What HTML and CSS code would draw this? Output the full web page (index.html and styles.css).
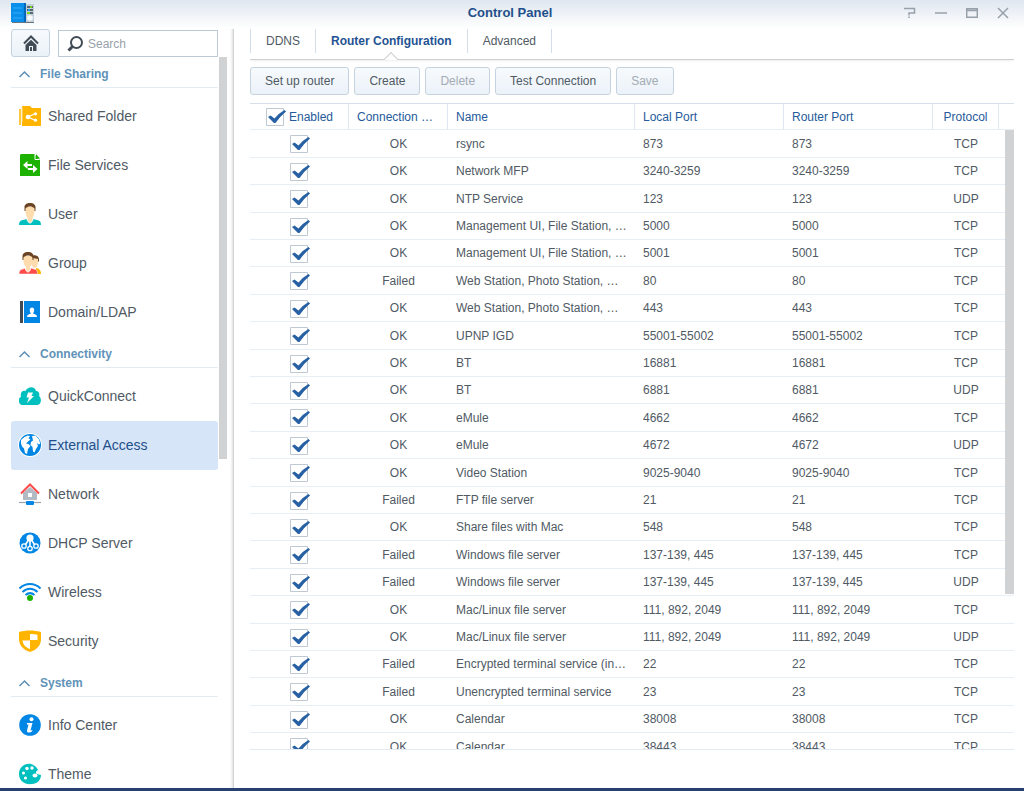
FILE: index.html
```html
<!DOCTYPE html>
<html lang="en">
<head>
    <meta charset="utf-8">
    <title>Control Panel</title>
    <link rel="stylesheet" href="styles.css">
</head>
<body>
    <!-- Title bar -->
    <header class="titlebar">
        <svg class="app-icon" viewBox="0 0 24 20">
            <rect x="12" y="1" width="11" height="18" fill="#c3d0da"/>
            <path d="M1 19h22v1H1z" fill="#68747f"/>
            <rect width="14" height="19" fill="#0a8fea"/>
            <rect x="13" width="2" height="19" fill="#0568b8"/>
            <path d="M2 5h9M2 10h9M2 15h9" stroke="#35aef8"/>
            <path d="M16 4h6M16 7h6M16 10h6" stroke="#39464f" stroke-width="1.5"/>
            <path d="M19 4h2M16 10h3" stroke="#7ed321" stroke-width="2"/>
            <path d="M17 7h2" stroke="#1b9df0" stroke-width="2"/>
            <circle cx="19" cy="15" r="2.8" fill="#f7fafb"/>
        </svg>
        <h1>Control Panel</h1>
        <div class="window-controls">
            <button aria-label="Help"><svg viewBox="0 0 12 12"><path d="M0 1.500h10.500v4.500H5v2.500M5 9.500v1.500"/></svg></button>
            <button aria-label="Minimize"><svg viewBox="0 0 12 12"><path d="M0 6h12"/></svg></button>
            <button aria-label="Maximize"><svg viewBox="0 0 12 12"><path d="M.7 1.700h10.600v8.600H.7zM1 3.500h10"/></svg></button>
            <button aria-label="Close"><svg viewBox="0 0 12 12"><path d="M1 1l10 10M11 1L1 11"/></svg></button>
        </div>
    </header>

    <div class="content">
        <!-- Sidebar -->
        <aside class="sidebar">
            <div class="toolbar">
                <button class="home" aria-label="Home">
                    <svg viewBox="0 0 16 16"><path d="M1 8.500L8 1.500l7 7" fill="none" stroke="#414b55" stroke-width="2"/><path d="M2.500 10L8 4.700l5.500 5.300v6H10v-5H6v5H2.500z" fill="#414b55"/><path d="M7 12h2v4H7z" fill="#414b55"/></svg>
                </button>
                <div class="search">
                    <svg viewBox="0 0 16 16"><circle cx="9.500" cy="6.500" r="5.500" fill="none" stroke="#414b55" stroke-width="2"/><path d="M5.500 10.500l-4 4" stroke="#414b55" stroke-width="3"/></svg>
                    <input type="text" placeholder="Search" aria-label="Search">
                </div>
            </div>
            <nav class="menu">
                <button class="section"><svg viewBox="0 0 12 8"><path d="M1 7l5-5 5 5"/></svg>File Sharing</button>
                <a href="#shared-folder">
                    <svg viewBox="0 0 22 22"><path d="M1 4v16" stroke="#ffb400" stroke-width="1.500"/><path d="M3 1h8l2 2h9v18H3z" fill="#ffb400"/><path d="M3 2v15" stroke="#ffe0a0"/><path d="M16.500 8.500L9 12l7.500 3.500" fill="none" stroke="#fff" stroke-width="1.200"/><circle cx="9" cy="12" r="2.300" fill="#fff"/><circle cx="16.500" cy="8.800" r="1.600" fill="#fff"/><circle cx="16.500" cy="15.200" r="1.600" fill="#fff"/></svg>
                    Shared Folder
                </a>
                <a href="#file-services">
                    <svg viewBox="0 0 22 22"><path d="M2 0h13l6 6v16H1V1z" fill="#1db100"/><path d="M17 0v4.500h4z" fill="#1db100"/><path d="M16 1v4.500h4.500" fill="none" stroke="#fff"/><path d="M4 11l4.500-4v3h4.500v2H8.500v3zM18.500 15L14 11v3H9v2h5v3z" fill="#fff"/></svg>
                    File Services
                </a>
                <a href="#user">
                    <svg viewBox="0 0 22 22"><path d="M0 22c0-3 1-4.500 4-5l4-1h6l4 1c3 .5 4 2 4 5z" fill="#00bfbf"/><path d="M8 13v3c0 2 2 4 3 4s3-2 3-4v-3z" fill="#ffdcae" stroke="#fff"/><path d="M6.500 4h9v5c0 3-2 7-4.500 7s-4.500-4-4.500-7z" fill="#ffdcae"/><path d="M5.500 8V4C5.500 1.500 8 0 11 0s5.500 1.500 5.500 4v4h-1V5.500C14 4 12.500 3.500 11 3.500S8 4 6.500 5.500V8z" fill="#6b4423"/></svg>
                    User
                </a>
                <a href="#group">
                    <svg viewBox="0 0 22 22"><path d="M17 16c3 .5 5 2 5 6h-5z" fill="#ffb400"/><path d="M13 6h6v4c0 3-1.500 6-3.500 6S12 13 13 6z" fill="#ffdcae"/><path d="M12 5c2-3 8-2 8 2v2l-1 1V7l-5-1z" fill="#6b4423"/><path d="M0 22c0-3 1-4.500 4-5l3-1h5l3 1c3 .5 3.500 2 3.500 5z" fill="#ff4a4a" stroke="#fff" stroke-width=".5"/><path d="M6.500 14v2.500c0 2 1.500 3.500 2.500 3.500s2.500-1.500 2.500-3.500V14z" fill="#ffdcae" stroke="#fff"/><path d="M4.500 4h9v5c0 3-2 7-4.500 7s-4.500-4-4.500-7z" fill="#ffdcae"/><path d="M3.500 8V4C3.500 1.500 6 0 9 0s5.500 1.500 5.500 4v4h-1V5.500C12 4 10.500 3.500 9 3.500S6 4 4.500 5.500V8z" fill="#6b4423"/></svg>
                    Group
                </a>
                <a href="#domain">
                    <svg viewBox="0 0 22 22"><path d="M1 0h3v22H1z" fill="#414b55"/><path d="M5 0h16v22H5z" fill="#0086e5"/><path d="M8 16c0-2 1-2.500 4-3.500-1.500-2-2-6 1-6s2.500 4 1 6c3 1 4 1.500 4 3.500z" fill="#fff"/></svg>
                    Domain/LDAP
                </a>
                <button class="section"><svg viewBox="0 0 12 8"><path d="M1 7l5-5 5 5"/></svg>Connectivity</button>
                <a href="#quickconnect">
                    <svg viewBox="0 0 22 22"><path d="M4 20c-5 0-5.500-7-2-8-1-4 1-7 4.500-6C9 1 16 1 17 6c3 0 4 3 3 5 3 2 2.500 9-2 9z" fill="#00bfbf"/><path d="M9 7.500h5l-1.500 3.500H15l-7 7 2-5.500H7.500z" fill="#fff"/></svg>
                    QuickConnect
                </a>
                <a href="#external-access" class="active">
                    <svg viewBox="0 0 22 22" overflow="visible"><circle cx="11" cy="11" r="12" fill="#fff"/><circle cx="11" cy="11" r="11" fill="#0086e5"/><path d="M2 6l3.500-3L9 1.500l2 .8-1.500 2 2 1.200L9 7.500l-2 2 2.500.5 2 2L9 15l-1 5-2-1-1-4.500-2-2-1-3zM13 2l3.500-.5L20 5.500l1.200 4-1.200 1-2-1.500 1 3-2 3-1.500 3.500-1.500-1-.5-4.500-2-2 .5-3 2-1.500z" fill="#fff"/></svg>
                    External Access
                </a>
                <a href="#network">
                    <svg viewBox="0 0 22 22"><path d="M4 10l7-6 7 6v7H4z" fill="#b2bbc4"/><path d="M9 10h4v4H9z" fill="#fff"/><path d="M2 10.500L11 1.500l9 9" fill="none" stroke="#ff4a4a" stroke-width="2"/><path d="M0 19.500h22" stroke="#9aa5af" stroke-width="1.200"/><rect x="7" y="18" width="8" height="4" rx="1" fill="#0086e5"/></svg>
                    Network
                </a>
                <a href="#dhcp">
                    <svg viewBox="0 0 22 22"><circle cx="11" cy="11" r="10.500" fill="#0086e5"/><circle cx="11" cy="6" r="3.600" fill="#fff"/><path d="M11 6v9M9.500 8L5.500 14M12.500 8l4 6" stroke="#fff" stroke-width="1.600"/><g fill="#0086e5" stroke="#fff" stroke-width="1.300"><circle cx="5" cy="14" r="2.200"/><circle cx="11" cy="16.500" r="2.200"/><circle cx="17" cy="14" r="2.200"/></g></svg>
                    DHCP Server
                </a>
                <a href="#wireless">
                    <svg viewBox="0 0 22 22"><g fill="none" stroke="#0086e5" stroke-width="2"><path d="M.5 7.500c6-6 15-6 21 0M3.500 11c4.500-4.500 10.500-4.500 15 0M6.500 14c3-2.500 6-2.500 9 0"/></g><circle cx="11" cy="17" r="3" fill="#1db100"/></svg>
                    Wireless
                </a>
                <a href="#security">
                    <svg viewBox="0 0 22 22"><path d="M0 2c7-2 15-2 22 0v7c0 6-4 11-11 13C4 20 0 15 0 9z" fill="#ffb400"/><path d="M11 4c3 0 5 .2 7.500.8V10H11zM3.500 10.500H11V19c-4-1.500-7-4-7.500-8.500z" fill="#fff"/></svg>
                    Security
                </a>
                <button class="section"><svg viewBox="0 0 12 8"><path d="M1 7l5-5 5 5"/></svg>System</button>
                <a href="#info-center">
                    <svg viewBox="0 0 22 22"><circle cx="11" cy="11" r="10.800" fill="#0086e5"/><circle cx="12.500" cy="5.300" r="2" fill="#fff"/><path d="M8 9h5.500l-2 7.500 2-.5-.5 1.500c-2 1.500-5.500 1.500-5-1l1.500-6H8z" fill="#fff"/></svg>
                    Info Center
                </a>
                <a href="#theme">
                    <svg viewBox="0 0 22 22"><path d="M12 1C5 0 0 5 0 11c0 7 6 11 13 10 5 0 9-4 9-9l-4-1c-2-1-1-3 1-4-1-3-4-5-7-6z" fill="#00bfbf"/><g fill="#fff"><circle cx="8" cy="5.500" r="1.700"/><circle cx="13" cy="5" r="1.700"/><circle cx="4.500" cy="10" r="1.500"/><circle cx="6.500" cy="15" r="1.600"/><ellipse cx="16" cy="12.500" rx="2.500" ry="2"/></g></svg>
                    Theme
                </a>
            </nav>
            <div class="scrollbar menu-scrollbar"></div>
        </aside>

        <!-- Router configuration -->
        <main>
            <div class="tabs" role="tablist">
                <button role="tab">DDNS</button>
                <button role="tab" class="active" aria-selected="true">Router Configuration</button>
                <button role="tab">Advanced</button>
            </div>
            <div class="actions">
                <button>Set up router</button>
                <button>Create</button>
                <button disabled>Delete</button>
                <button>Test Connection</button>
                <button disabled>Save</button>
            </div>
            <div class="rules">
                <table>
                    <colgroup>
                        <col class="col-status"><col class="col-status"><col>
                        <col class="col-port"><col class="col-port"><col class="col-protocol"><col class="col-end">
                    </colgroup>
                    <thead>
                        <tr>
                            <th class="check-all"><label><input type="checkbox" checked> Enabled</label></th>
                            <th>Connection …</th>
                            <th>Name</th>
                            <th>Local Port</th>
                            <th>Router Port</th>
                            <th class="center">Protocol</th>
                            <td></td>
                        </tr>
                    </thead>
                    <tbody id="rules"></tbody>
                </table>
                <div class="scrollbar table-scrollbar"></div>
            </div>
        </main>
    </div>

    <script src="script.js"></script>
</body>
</html>
```
FILE: styles.css
```css
* {
    box-sizing: border-box;
}
body {
    display: flex;
    flex-direction: column;
    height: 100vh;
    margin: 0;
    border-bottom: 3px solid #27406f;
    background: linear-gradient(#e0e7f0, #fff 29px);
    color: #505a64;
    font-family: "Liberation Sans", Arial, sans-serif;
    font-size: 12px;
    overflow: hidden;
}
button, input {
    margin: 0;
    padding: 0;
    border: none;
    background: none;
    color: inherit;
    font: inherit;
}
button {
    cursor: pointer;
}
svg {
    display: block;
    flex: none;
}

/* Title bar */
.titlebar {
    display: grid;
    grid-template-columns: 1fr auto 1fr;
    align-items: center;
    height: 29px;
    padding: 0 15px 4px 11px;
    flex: none;
}
.titlebar h1 {
    margin: 0;
    color: #1f4f8b;
    font-size: 13px;
}
.app-icon {
    width: 24px;
    height: 20px;
}
.window-controls {
    display: flex;
    justify-content: flex-end;
    gap: 19px;
}
.window-controls svg {
    width: 12px;
    height: 12px;
    fill: none;
    stroke: #98a0aa;
    stroke-width: 1.5;
}

.content {
    display: flex;
    flex: 1;
    min-height: 0;
}

/* Sidebar */
.sidebar {
    position: relative;
    display: flex;
    flex-direction: column;
    width: 234px;
    flex: none;
    padding: 0 15px 0 11px;
    border-right: 1px solid #d0d3d6;
    box-shadow: inset -3px 0 3px -2px #ddd;
}
.toolbar {
    display: flex;
    gap: 8px;
    height: 28px;
    flex: none;
}
.home, .actions button {
    border: 1px solid #c5d2df;
    border-radius: 3px;
    background: linear-gradient(#f7fafd, #ebf2f8);
}
.home {
    display: flex;
    align-items: center;
    justify-content: center;
    width: 39px;
}
.home svg, .search svg {
    width: 16px;
    height: 16px;
}
.search {
    display: flex;
    flex: 1;
    align-items: center;
    gap: 5px;
    margin-top: 1px;
    padding: 0 8px;
    border: 1px solid #bccad8;
    background: #fff;
}
.search input {
    width: 100%;
    outline: none;
}
.search input::placeholder {
    color: #98a1aa;
}
.menu {
    flex: 1;
    min-height: 0;
    overflow: hidden;
}
.menu .section {
    display: flex;
    align-items: center;
    gap: 9px;
    width: 100%;
    height: 27px;
    margin: 4px 0;
    padding-left: 7px;
    border-bottom: 1px solid #e3ebf2;
    color: #5f93b9;
    font-weight: bold;
}
.section svg {
    width: 13px;
    height: 8px;
    fill: none;
    stroke: #5f8fb4;
    stroke-width: 1.5;
}
.menu a {
    display: flex;
    align-items: center;
    gap: 7px;
    height: 49px;
    padding: 0 8px 1px;
    border-radius: 3px;
    color: #505a64;
    font-size: 14px;
    text-decoration: none;
}
.menu a svg {
    width: 22px;
    height: 22px;
}
.menu a.active {
    background: #d6e6f8;
    color: #1f4f8b;
}
.scrollbar {
    position: absolute;
    right: 0;
    width: 9px;
    background: #d0d2d4;
}
.menu-scrollbar {
    top: 28px;
    right: 6px;
    width: 8px;
    height: 53%;
}

/* Main panel */
main {
    display: flex;
    flex: 1;
    flex-direction: column;
    min-width: 0;
    padding: 0 10px 38px 16px;
}
.tabs {
    display: flex;
    height: 31px;
    flex: none;
    padding-bottom: 6px;
    border-bottom: 1px solid #cdd0d2;
    box-shadow: 0 2px 2px -1px #eee;
}
.tabs button {
    position: relative;
    padding: 0 15px;
    border-right: 1px solid #d3deea;
}
.tabs button:first-child {
    border-left: 1px solid #d3deea;
}
.tabs .active {
    color: #1f5393;
    font-weight: bold;
}
.tabs .active::after {
    content: "";
    position: absolute;
    bottom: -11px;
    left: 50%;
    width: 9px;
    height: 9px;
    margin-left: -5px;
    border: 1px solid #cdd0d2;
    border-width: 1px 0 0 1px;
    background: linear-gradient(135deg, #fff 50%, transparent 50%);
    transform: rotate(45deg);
}
.actions {
    display: flex;
    gap: 5px;
    margin: 7px 0 8px;
}
.actions button {
    height: 28px;
    padding: 0 14px;
}
.actions button:disabled {
    color: #a3abb4;
    cursor: default;
}

/* Port forwarding rules */
.rules {
    position: relative;
    flex: 1;
    min-height: 0;
    border-top: 1px solid #d5e0eb;
    border-bottom: 1px solid #e3ebf2;
    overflow: hidden;
}
table {
    width: 100%;
    border-spacing: 0;
    table-layout: fixed;
}
.col-status {
    width: 99px;
}
.col-port {
    width: 149px;
}
.col-protocol {
    width: 66px;
}
.col-end {
    width: 15px;
}
th, td {
    height: 27px;
    padding: 0 8px;
    border-bottom: 1px solid #e8eef5;
    line-height: 16px;
    white-space: nowrap;
    overflow: hidden;
}
thead th, thead td {
    height: 26px;
}
th {
    border-right: 1px solid #dfe8f2;
    color: #265a9b;
    font-weight: normal;
    text-align: left;
}
/* keeps the row pitch between 27 and 28px */
tbody tr:nth-child(5n+1) td, tbody tr:nth-child(5n+3) td {
    height: 28px;
}
th.center, td.center {
    padding: 0;
    text-align: center;
}
th.check-all {
    padding: 0 0 0 16px;
}
.check-all label {
    display: flex;
    align-items: center;
    gap: 3px;
}
input[type="checkbox"] {
    appearance: none;
    display: block;
    width: 20px;
    height: 18px;
    background: url("data:image/svg+xml,%3Csvg xmlns='http://www.w3.org/2000/svg' viewBox='0 0 20 18'%3E%3Cpath d='M.5.5h17v17H.5z' fill='%23fff' stroke='%23bfc9d4'/%3E%3Cpath d='M2 9L4.500 7.500 8.500 10.500Q13 5 18.500 2L20 3.500Q14 8.500 9.500 15H8z' fill='%232760a3'/%3E%3C/svg%3E") no-repeat;
}
td input[type="checkbox"] {
    margin: 1px auto 0;
}
.table-scrollbar {
    top: 26px;
    height: 72%;
}
```
FILE: script.js
```js
// name, local/router port, protocol, connection result
const rules = [
    ["rsync", "873", "TCP", "OK"],
    ["Network MFP", "3240-3259", "TCP", "OK"],
    ["NTP Service", "123", "UDP", "OK"],
    ["Management UI, File Station, …", "5000", "TCP", "OK"],
    ["Management UI, File Station, …", "5001", "TCP", "OK"],
    ["Web Station, Photo Station, …", "80", "TCP", "Failed"],
    ["Web Station, Photo Station, …", "443", "TCP", "OK"],
    ["UPNP IGD", "55001-55002", "TCP", "OK"],
    ["BT", "16881", "TCP", "OK"],
    ["BT", "6881", "UDP", "OK"],
    ["eMule", "4662", "TCP", "OK"],
    ["eMule", "4672", "UDP", "OK"],
    ["Video Station", "9025-9040", "TCP", "OK"],
    ["FTP file server", "21", "TCP", "Failed"],
    ["Share files with Mac", "548", "TCP", "OK"],
    ["Windows file server", "137-139, 445", "TCP", "Failed"],
    ["Windows file server", "137-139, 445", "UDP", "Failed"],
    ["Mac/Linux file server", "111, 892, 2049", "TCP", "OK"],
    ["Mac/Linux file server", "111, 892, 2049", "UDP", "OK"],
    ["Encrypted terminal service (in…", "22", "TCP", "Failed"],
    ["Unencrypted terminal service", "23", "TCP", "Failed"],
    ["Calendar", "38008", "TCP", "OK"],
    ["Calendar", "38443", "TCP", "OK"]
];

document.getElementById("rules").innerHTML = rules.map(([name, port, protocol, status]) => `
    <tr>
        <td><input type="checkbox" aria-label="Enable ${name} ${port}" checked></td>
        <td class="center">${status}</td>
        <td>${name}</td>
        <td>${port}</td>
        <td>${port}</td>
        <td class="center">${protocol}</td>
        <td></td>
    </tr>`).join("");
```
